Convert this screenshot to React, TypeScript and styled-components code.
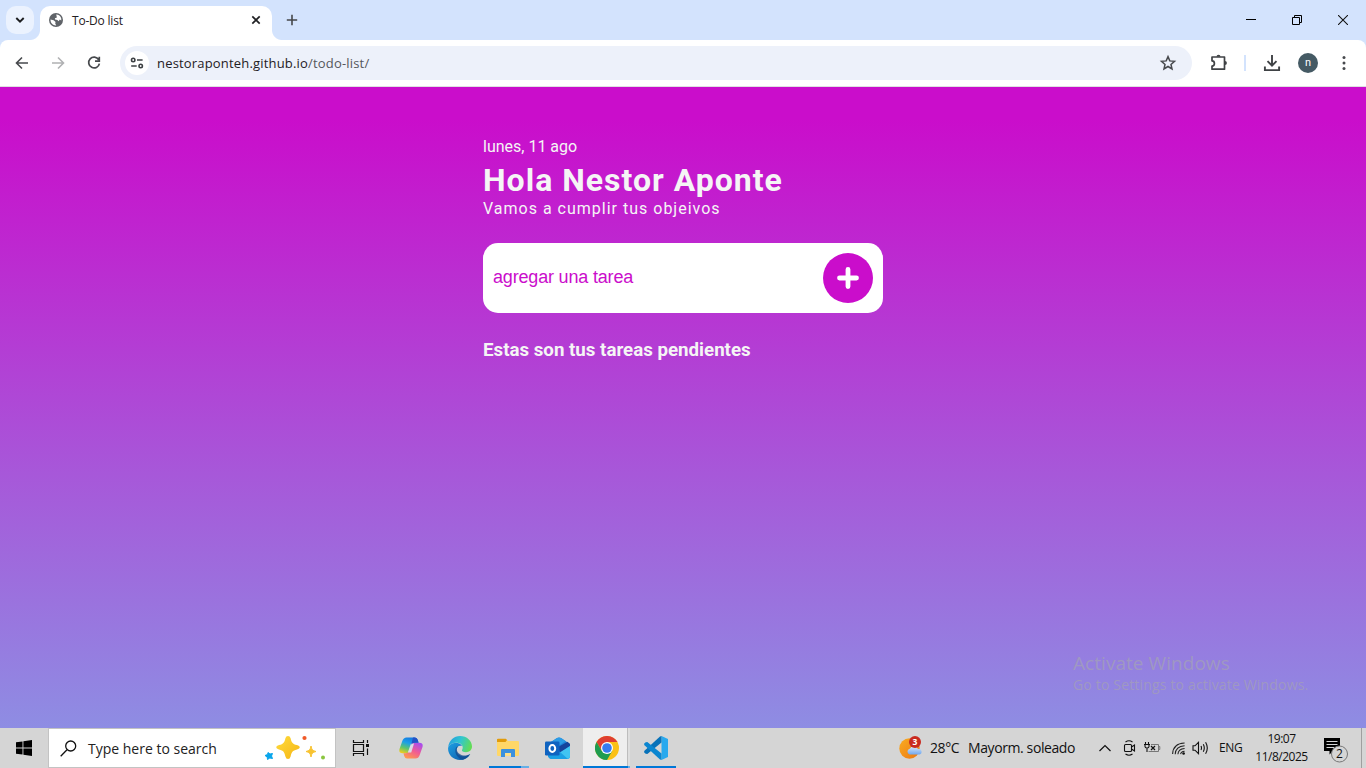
import React from "react";
import styled, { createGlobalStyle } from "styled-components";

const ui = `"Open Sans", "Noto Sans", sans-serif`;

const GlobalStyle = createGlobalStyle`
  * { box-sizing: border-box; }
  body { margin: 0; overflow: hidden; }
  svg { display: block; flex: none; }
`;

const Screen = styled.div`
  width: 1366px;
  height: 768px;
  display: flex;
  flex-direction: column;
  overflow: hidden;
`;

const TabStrip = styled.div`
  height: 40px;
  flex: none;
  display: flex;
  align-items: flex-start;
  background: #d3e3fd;
`;

const TabSearch = styled.div`
  width: 28px;
  height: 28px;
  margin: 6px 6px 0;
  border-radius: 10px;
  display: grid;
  place-items: center;
  background: #ebf2fe;
`;

const Tab = styled.div`
  position: relative;
  width: 232px;
  height: 34px;
  margin-top: 6px;
  padding: 0 10px 6px 9px;
  border-radius: 10px 10px 0 0;
  background: #fff;
  display: flex;
  align-items: center;
  &::before, &::after {
    content: "";
    position: absolute;
    bottom: 0;
    width: 10px;
    height: 10px;
  }
  &::before {
    left: -10px;
    background: radial-gradient(circle at 0 0, transparent 9.5px, #fff 10.5px);
  }
  &::after {
    right: -10px;
    background: radial-gradient(circle at 100% 0, transparent 9.5px, #fff 10.5px);
  }
`;

const Label = styled.span<{ $size: number; $spacing?: number; $color?: string }>`
  font-family: ${ui};
  font-size: ${(p) => p.$size}px;
  letter-spacing: ${(p) => p.$spacing ?? 0}px;
  color: ${(p) => p.$color ?? "#111"};
  line-height: 18px;
  white-space: nowrap;
`;

const TabTitle = styled(Label)`
  flex: 1;
  margin-left: 9px;
  padding-top: 2px;
`;

const NewTab = styled.div`
  margin: 13px 0 0 13px;
`;

const WindowControls = styled.div`
  display: flex;
  margin-left: auto;
`;

const WindowButton = styled.div`
  width: 46px;
  height: 40px;
  display: grid;
  place-items: center;
`;

const ToolbarBack = styled.div`
  flex: none;
  background: #d3e3fd;
`;

const Toolbar = styled.div`
  height: 47px;
  padding: 0 12px 0 13px;
  display: flex;
  align-items: center;
  background: #fff;
  border-radius: 8px 8px 0 0;
  border-bottom: 1px solid #dfdfe2;
`;

const NavButtons = styled.div`
  display: flex;
  gap: 18px;
`;

const AddressBar = styled.div`
  width: 1072px;
  height: 34px;
  margin-left: 17px;
  padding: 0 15px 0 5px;
  border-radius: 17px;
  background: #edf1fa;
  display: flex;
  align-items: center;
`;

const SiteInfo = styled.div`
  width: 24px;
  height: 24px;
  border-radius: 50%;
  background: #fff;
  display: grid;
  place-items: center;
`;

const Url = styled(Label)`
  flex: 1;
  margin-left: 8px;
  span { color: #55575b; }
`;

const ToolbarActions = styled.div`
  display: flex;
  align-items: center;
  margin-left: auto;
`;

const Separator = styled.div`
  width: 2px;
  height: 16px;
  margin: 0 17px 0 16px;
  background: #d3e3fd;
`;

const Avatar = styled.div`
  width: 20px;
  height: 20px;
  margin: 0 16px 0 17px;
  border-radius: 50%;
  background: #455a64;
  color: #fff;
  font: 11px/19px Roboto, sans-serif;
  text-align: center;
`;

const Page = styled.main`
  flex: 1;
  position: relative;
  background: linear-gradient(180deg, #ca0dcb 5%, #8e8de3 100%);
  display: flex;
  justify-content: center;
  font-family: Roboto, sans-serif;
  color: #f5f5f5;
`;

const Content = styled.section`
  width: 400px;
  padding-top: 50px;
`;

const DateLine = styled.p`
  margin: 0;
  font-size: 16px;
  line-height: 19px;
`;

const Greeting = styled.h1`
  margin: 5px 0 0;
  font-size: 32px;
  line-height: 38px;
  letter-spacing: 1px;
`;

const Motto = styled.p`
  margin: 0;
  font-size: 16px;
  line-height: 19px;
  letter-spacing: 1px;
`;

const TaskForm = styled.div`
  height: 70px;
  margin-top: 25px;
  padding: 10px;
  border-radius: 15px;
  background: #fff;
  display: flex;
  align-items: center;
  justify-content: space-between;
`;

const Placeholder = styled.span`
  font: 18px/22px "Liberation Sans", Arial, sans-serif;
  letter-spacing: -0.18px;
  color: #ca0dcb;
  margin-top: -2px;
`;

const AddButton = styled.div`
  width: 50px;
  height: 50px;
  border-radius: 50%;
  background: #ca0dcb;
  display: grid;
  place-items: center;
`;

const Pending = styled.h3`
  margin: 26px 0 0;
  font-size: 18.72px;
  line-height: 22px;
`;

const Watermark = styled.div`
  position: absolute;
  left: 1073px;
  top: 563px;
  display: flex;
  flex-direction: column;
`;

const WatermarkTitle = styled(Label)`
  line-height: 26px;
`;

const Taskbar = styled.footer`
  height: 40px;
  flex: none;
  display: flex;
  align-items: stretch;
  background: #d5d5d5;
`;

const Start = styled.div`
  width: 48px;
  display: grid;
  place-items: center;
`;

const SearchBox = styled.div`
  width: 288px;
  border: 1px solid #c3c3c3;
  background: #fff;
  display: flex;
  align-items: center;
  padding: 0 7px 0 11px;
`;

const SearchText = styled(Label)`
  flex: 1;
  margin-left: 11px;
  padding-top: 1px;
`;

const Apps = styled.div`
  display: flex;
`;

const TaskbarApp = styled.div<{ $active?: boolean; $shift?: number }>`
  width: 49px;
  position: relative;
  display: grid;
  place-items: center;
  background: ${(p) => (p.$active ? "linear-gradient(90deg, transparent 2px, #eeeeee 2px 46px, #bdbdbd 46px 47px, #dedede 47px)" : "none")};
  padding-left: ${(p) => p.$shift ?? 0}px;
`;

const Underline = styled.div<{ $left: number; $main: number; $extra: number }>`
  position: absolute;
  bottom: 0;
  left: ${(p) => p.$left}px;
  width: ${(p) => p.$main + p.$extra}px;
  height: 2px;
  background: linear-gradient(90deg, #0078d7 ${(p) => p.$main}px, #67b0e6 ${(p) => p.$main}px);
`;

const Tray = styled.div`
  display: flex;
  align-items: center;
  margin-left: auto;
`;

const TrayItem = styled.div<{ $width: number }>`
  width: ${(p) => p.$width}px;
  flex: none;
  display: flex;
  align-items: center;
`;

const Clock = styled.div`
  width: 75px;
  display: flex;
  flex-direction: column;
  align-items: center;
`;

const ShowDesktop = styled.div`
  width: 5px;
  align-self: stretch;
  border-left: 1px solid #9f9f9f;
`;

const Globe = () => (
  <svg width="14" height="14" viewBox="0 0 14 14">
    <circle cx="7" cy="7" r="7" fill="#5f6368" />
    <path d="M7.2 1.5 C9.6 1.5 11.6 3.2 12.2 5.2 L12.3 7.4 L10.8 6.6 L9.6 8.2 L8.4 6.9 L6 6.6 L5.9 5.2 L7.9 4.6 Z" fill="#fff" />
    <path d="M1.5 6.6 L4.6 7.2 L6.6 9 L6.2 10.2 L7.2 12.5 C4 12.6 1.4 10.2 1.5 6.6Z" fill="#fff" />
  </svg>
);

const Extension = () => (
  <svg width="18" height="18" viewBox="0 0 18 18" fill="none" stroke="#3f4245" strokeWidth="1.7">
    <path d="M2 3 H14.5 V15.2 H2 V12 C5.2 12 5.2 6.8 2 6.8 Z" strokeLinejoin="round" />
    <path d="M6.5 2.8 A2 2 0 0 1 10.5 2.8Z M14.9 7 A2 2 0 0 1 14.9 11Z" fill="#3f4245" stroke="none" />
  </svg>
);

const Sparkles = () => (
  <svg width="64" height="32" viewBox="0 0 64 32">
    <defs>
      <linearGradient id="star" x1="0" y1="0" x2="1" y2="1">
        <stop offset="0" stopColor="#ffdc3d" />
        <stop offset="1" stopColor="#f5b515" />
      </linearGradient>
    </defs>
    <path d="M24 4 Q26 4 26.6 6.2 C27.6 10.4 28.4 12 33 13 Q35.8 14 35.8 15.3 Q35.8 16.6 33 17.5 C28.4 18.5 27.6 20.2 26.6 24.5 Q26 27 24 27 Q22 27 21.4 24.5 C20.4 20.2 19.6 18.5 15 17.5 Q12.2 16.6 12.2 15.3 Q12.2 14 15 13 C19.6 12 20.4 10.4 21.4 6.2 Q22 4 24 4Z" fill="url(#star)" />
    <path d="M47 14 C47.7 17.8 48.5 18.6 52 19.5 C48.5 20.4 47.7 21.2 47 25 C46.3 21.2 45.5 20.4 42 19.5 C45.5 18.6 46.3 17.8 47 14Z" fill="#f8c331" stroke="#f8c331" strokeLinejoin="round" />
    <path d="M4 20.5 L6 22 L8.5 21.5 L7.5 24 L8.5 26.5 L5.8 26 L3.5 27.5 L3.2 25 L1 23.5 L3.5 22.5Z" fill="#08a5ec" stroke="#08a5ec" strokeLinejoin="round" />
    <circle cx="40.5" cy="6" r="2.1" fill="#f05a28" />
    <circle cx="59" cy="25.5" r="2" fill="#8ac53f" />
  </svg>
);

const TaskView = () => (
  <svg width="18" height="18" viewBox="0 0 18 18" fill="none" stroke="#111" strokeWidth="1.2">
    <path d="M1.5 1 V3.5 H11.5 V1 M1.5 17 V14.5 H11.5 V17 M1.5 5.5 H11.5 V12.5 H1.5Z M15.5 1 V4 M15.5 9.5 V16" />
    <rect x="14" y="5" width="3" height="3" fill="#111" stroke="none" />
  </svg>
);

const Copilot = () => (
  <svg width="24" height="22" viewBox="0 0 24 22">
    <defs>
      <linearGradient id="cp1" x1="0.6" y1="0" x2="0.2" y2="1">
        <stop offset="0" stopColor="#1478e0" />
        <stop offset=".35" stopColor="#1b9fe8" />
        <stop offset=".68" stopColor="#5ec56d" />
        <stop offset="1" stopColor="#f4cc1c" />
      </linearGradient>
      <linearGradient id="cp2" x1=".8" y1="0" x2=".2" y2="1">
        <stop offset="0" stopColor="#a64cf0" />
        <stop offset=".5" stopColor="#f15c93" />
        <stop offset="1" stopColor="#ff9c4a" />
      </linearGradient>
    </defs>
    <path d="M7.5 .5 H16 Q18 .5 18.8 3 L19.5 5.7 H17 Q14.8 5.7 14 8 L11.8 14 Q11 16.3 8.8 16.3 H3.5 Q-.5 16.3 .5 12 L3.3 4 Q4.5 .5 7.5 .5Z" fill="url(#cp1)" />
    <path d="M16.5 21.5 H8 Q6 21.5 5.2 19 L4.5 16.3 H7 Q9.2 16.3 10 14 L12.2 8 Q13 5.7 15.2 5.7 H20.5 Q24.5 5.7 23.5 10 L20.7 18 Q19.5 21.5 16.5 21.5Z" fill="url(#cp2)" />
    <path d="M12 6.5 H15 L12.2 15.5 H8.8Z" fill="#d9dbe6" />
    <path d="M14 .5 H16 Q18 .5 18.8 3 L19.6 5.7 H15.2 Q13.4 5.7 12.2 7.8Z" fill="#2451c6" />
  </svg>
);

const Edge = () => (
  <svg width="24" height="24" viewBox="0 0 24 24">
    <defs>
      <linearGradient id="ed1" x1="0" y1=".2" x2="1" y2=".5">
        <stop offset="0" stopColor="#249bdf" />
        <stop offset=".5" stopColor="#31c6cf" />
        <stop offset="1" stopColor="#62dc55" />
      </linearGradient>
      <linearGradient id="ed2" x1="0" y1="0" x2="1" y2="1">
        <stop offset="0" stopColor="#1e9fe3" />
        <stop offset="1" stopColor="#0c56a5" />
      </linearGradient>
    </defs>
    <path d="M.2 11 C1 4.5 6 0 12 0 C19 0 24 5 24 10.5 C24 14 21.3 16.2 18 16.2 C15 16.2 13.5 15 14 14 C15.8 11.5 14.5 7.5 9.5 6.8 C5 6.3 1.5 8.5 .2 11Z" fill="url(#ed1)" />
    <path d="M.1 12 C.5 8.5 5 6.4 9.5 7 C12 7.4 13.5 8.7 14 10 C11 8.8 8.5 11 8.5 14 C8.5 18.5 13 20.8 17 20.2 C19.5 19.8 21 18.8 22.2 18 C20 22 16.5 24 12 24 C5 24 -.4 18.5 .1 12Z" fill="url(#ed2)" />
    <path d="M8.5 11 C5.5 15 8.5 22 14.2 23.8 C17.5 23.2 20.5 21 22.2 18 C19 19.8 15 20.2 11.8 18 C8.5 15.5 8 12.7 10 10.4Z" fill="#11498d" opacity=".75" />
  </svg>
);

const Folder = () => (
  <svg width="22" height="20" viewBox="0 0 22 20">
    <path d="M0 2 Q0 1 1 1 H9 L11 3 H21 Q22 3 22 4 V17 Q22 18 21 18 H1 Q0 18 0 17Z" fill="#ffd768" />
    <path d="M0 1.5 Q0 .7 1 .7 H8.8 L10 2 L8.5 4 H0Z" fill="#e19b0b" />
    <path d="M4 19 V12 Q4 11 5 11 H17 Q18 11 18 12 V19 H14 V15 H8 V19Z" fill="#3c91de" />
    <path d="M8 15 H14 V17.8 H8Z" fill="#ffe08a" />
  </svg>
);

const Outlook = () => (
  <svg width="25" height="24" viewBox="0 0 25 24">
    <path d="M3 8 L12 2 Q14 1 16 2 L25 8 V20 Q25 23 22 23 H7 Q4 23 3 20Z" fill="#1d82d8" />
    <path d="M4.5 7 L12 2 Q14 1 16 2 L20.5 5 L12 11Z" fill="#2b9be6" />
    <path d="M13 11 L22.5 5.8 L25 8 V10 L15 17Z" fill="#15439c" />
    <path d="M25 10 V20 Q25 23 22 23 H7 L14 17Z" fill="#40c4f2" />
    <path d="M3 19 L15 16 L23 23 H7 Q4 23 3 20Z" fill="#1aa0e5" />
    <rect x="0" y="5.5" width="14.5" height="14" rx="1.3" fill="#0f63c0" />
    <ellipse cx="7.3" cy="12.5" rx="2.9" ry="3.4" fill="none" stroke="#fff" strokeWidth="2" />
  </svg>
);

const Chrome = () => (
  <svg width="24" height="24" viewBox="0 0 24 24">
    <circle cx="12" cy="12" r="12" fill="#fbc116" />
    <path d="M1.6 6 A12 12 0 0 1 22.4 6 H12 L6.8 15Z" fill="#df3f32" />
    <path d="M1.6 6 A12 12 0 0 0 12 24 L17.2 15 H6.8Z" fill="#1f9d50" />
    <circle cx="12" cy="12" r="6" fill="#fff" />
    <circle cx="12" cy="12" r="4.8" fill="#367cf0" />
  </svg>
);

const VsCode = () => (
  <svg width="24" height="24" viewBox="0 0 24 24">
    <path d="M17.5 0 L24 3 V21 L17.5 24Z" fill="#29a9ee" />
    <path d="M17.5 0 V6.5 L3.3 18 L1.7 17.8 L.2 16.4 V15 L16 .6Z" fill="#0872b9" />
    <path d="M17.5 24 V17.5 L3.3 6 L1.7 6.2 L.2 7.6 V9 L16 23.4Z" fill="#0b86d0" />
  </svg>
);

const Weather = () => (
  <svg width="24" height="24" viewBox="0 0 24 24">
    <defs>
      <linearGradient id="sun" x1="0" y1="0" x2="1" y2="1">
        <stop offset="0" stopColor="#f9ac22" />
        <stop offset="1" stopColor="#ec7813" />
      </linearGradient>
      <linearGradient id="cloud" x1="0" y1="0" x2="0" y2="1">
        <stop offset="0" stopColor="#dce9fb" />
        <stop offset="1" stopColor="#72a9ef" />
      </linearGradient>
    </defs>
    <circle cx="10.5" cy="12.5" r="10.2" fill="url(#sun)" />
    <path d="M10.5 18.4 A2.9 2.9 0 0 1 10.7 12.8 A4.5 4.5 0 0 1 19 13 A2.8 2.8 0 0 1 20.5 18.4Z" fill="url(#cloud)" />
    <circle cx="16" cy="6" r="6" fill="#c92a20" />
    <text x="16" y="9.2" textAnchor="middle" fontFamily="Open Sans, sans-serif" fontSize="8.5" fontWeight="700" fill="#fff">3</text>
  </svg>
);

export default function App() {
  return (
    <Screen>
      <GlobalStyle />
      <TabStrip>
        <TabSearch>
          <svg width="10" height="8" viewBox="0 0 10 8" fill="none" stroke="#1c1d1f" strokeWidth="1.9"><path d="M1.3 2 L5 5.7 L8.7 2" /></svg>
        </TabSearch>
        <Tab>
          <Globe />
          <TabTitle $size={12} $spacing={-0.2} $color="#1f2023">To-Do list</TabTitle>
          <svg width="12" height="12" viewBox="0 0 12 12" stroke="#202124" strokeWidth="1.7"><path d="M2.3 2.3 L9.7 9.7 M9.7 2.3 L2.3 9.7" /></svg>
        </Tab>
        <NewTab>
          <svg width="14" height="14" viewBox="0 0 14 14" stroke="#45474a" strokeWidth="1.6"><path d="M7 1.8 V12.2 M1.8 7 H12.2" /></svg>
        </NewTab>
        <WindowControls>
          <WindowButton><svg width="10" height="10" viewBox="0 0 10 10"><path d="M0 4 H10 V5 H0Z" /></svg></WindowButton>
          <WindowButton><svg width="10" height="10" viewBox="0 0 10 10" fill="none" stroke="#000"><path d="M.5 2.5 H7.5 V9.5 H.5Z M2.5 2 V.5 H9.5 V7.5 H8" /></svg></WindowButton>
          <WindowButton><svg width="10" height="10" viewBox="0 0 10 10" stroke="#111" strokeWidth="1.05"><path d="M0 0 L10 10 M10 0 L0 10" /></svg></WindowButton>
        </WindowControls>
      </TabStrip>
      <ToolbarBack>
        <Toolbar>
          <NavButtons>
            <svg width="18" height="18" viewBox="0 0 18 18" fill="none" stroke="#47494d" strokeWidth="1.6"><path d="M15 9 H4 M9 3.5 L3.5 9 L9 14.5" /></svg>
            <svg width="18" height="18" viewBox="0 0 18 18" fill="none" stroke="#b0b1b3" strokeWidth="1.6"><path d="M3 9 H14 M9 3.5 L14.5 9 L9 14.5" /></svg>
            <svg width="18" height="18" viewBox="0 0 18 18" fill="none" stroke="#47494d" strokeWidth="1.7"><path d="M13.7 5.7 A5.4 5.4 0 1 0 14.4 9.6 M14.3 2.8 V7.1 H10" /></svg>
          </NavButtons>
          <AddressBar>
            <SiteInfo>
              <svg width="14" height="12" viewBox="0 0 14 12" fill="none" stroke="#3c4043" strokeWidth="1.6"><circle cx="3.2" cy="3" r="1.7" /><path d="M7 3 H12.6 M1.2 9 H6.7" /><circle cx="10.7" cy="9" r="1.7" /></svg>
            </SiteInfo>
            <Url $size={13} $spacing={0.18} $color="#1f2023">nestoraponteh.github.io<span>/todo-list/</span></Url>
            <svg width="18" height="18" viewBox="0 0 18 18" fill="none" stroke="#47494d" strokeWidth="1.5"><path d="M9 2.6 L10.8 6.9 L15.5 7.3 L12 10.4 L13 15 L9 12.5 L5 15 L6 10.4 L2.5 7.3 L7.2 6.9Z" /></svg>
          </AddressBar>
          <ToolbarActions>
            <Extension />
            <Separator />
            <svg width="18" height="18" viewBox="0 0 18 18" fill="none" stroke="#3f4245" strokeWidth="1.9"><path d="M9 1 V11.5 M4.5 7.2 L9 11.7 L13.5 7.2 M1.9 12.5 V16.1 H16.1 V12.5" /></svg>
            <Avatar>n</Avatar>
            <svg width="20" height="18" viewBox="0 0 20 18" fill="#47494d"><circle cx="10" cy="3.5" r="1.5" /><circle cx="10" cy="9" r="1.5" /><circle cx="10" cy="14.5" r="1.5" /></svg>
          </ToolbarActions>
        </Toolbar>
      </ToolbarBack>
      <Page>
        <Content>
          <DateLine>lunes, 11 ago</DateLine>
          <Greeting>Hola Nestor Aponte</Greeting>
          <Motto>Vamos a cumplir tus objeivos</Motto>
          <TaskForm>
            <Placeholder>agregar una tarea</Placeholder>
            <AddButton>
              <svg width="24" height="24" viewBox="0 0 24 24" stroke="#fff" strokeWidth="4.8" strokeLinecap="round"><path d="M12 3.5 V20.5 M3.5 12 H20.5" /></svg>
            </AddButton>
          </TaskForm>
          <Pending>Estas son tus tareas pendientes</Pending>
        </Content>
        <Watermark>
          <WatermarkTitle $size={19} $spacing={0.05} $color="#9f98c2">Activate Windows</WatermarkTitle>
          <Label $size={14} $spacing={0.17} $color="#9f98c2">Go to Settings to activate Windows.</Label>
        </Watermark>
      </Page>
      <Taskbar>
        <Start>
          <svg width="16" height="16" viewBox="0 0 16 16"><path d="M0 2.3 L6.5 1.4 V7.5 H0Z M7.4 1.2 L16 0 V7.5 H7.4Z M0 8.4 H6.5 V14.6 L0 13.7Z M7.4 8.4 H16 V16 L7.4 14.8Z" /></svg>
        </Start>
        <SearchBox>
          <svg width="17" height="17" viewBox="0 0 17 17" fill="none" stroke="#111" strokeWidth="1.3"><circle cx="10.7" cy="6" r="5" /><path d="M7 9.8 L.7 16.2" /></svg>
          <SearchText $size={14} $spacing={0} $color="#222">Type here to search</SearchText>
          <Sparkles />
        </SearchBox>
        <Apps>
          <TaskbarApp $shift={-1}><TaskView /></TaskbarApp>
          <TaskbarApp $shift={2}><Copilot /></TaskbarApp>
          <TaskbarApp $shift={2}><Edge /></TaskbarApp>
          <TaskbarApp><Folder /><Underline $left={6} $main={32} $extra={8} /></TaskbarApp>
          <TaskbarApp $shift={1}><Outlook /></TaskbarApp>
          <TaskbarApp $active $shift={2}><Chrome /><Underline $left={2} $main={45} $extra={2} /></TaskbarApp>
          <TaskbarApp $shift={2}><VsCode /><Underline $left={6} $main={40} $extra={0} /></TaskbarApp>
        </Apps>
        <Tray>
          <TrayItem $width={31}><Weather /></TrayItem>
          <TrayItem $width={38}><Label $size={14} $spacing={-0.4}>28°C</Label></TrayItem>
          <TrayItem $width={131}><Label $size={14} $spacing={-0.4}>Mayorm. soleado</Label></TrayItem>
          <TrayItem $width={24}><svg width="12" height="8" viewBox="0 0 12 8" fill="none" stroke="#111" strokeWidth="1.2"><path d="M.5 7 L6 1.5 L11.5 7" /></svg></TrayItem>
          <TrayItem $width={21}><svg width="13" height="16" viewBox="0 0 13 16" fill="none" stroke="#111" strokeWidth="1.1"><rect x="1.5" y="4.5" width="7" height="7" rx="1" /><path d="M8.5 7 L11.5 5 V11 L8.5 9 M2.5 2 Q6 -.4 9.5 2 M2.5 14 Q6 16.4 9.5 14" /></svg></TrayItem>
          <TrayItem $width={28}>
            <svg width="17" height="14" viewBox="0 0 17 14" fill="none" stroke="#111" strokeWidth="1.1">
              <path d="M1.5 1 V3.5 M4.5 1 V3.5 M0 3.5 H6 M1 4 V5.5 Q1 7 3 7 Q5 7 5 5.5 V4 M3 7 V11" />
              <path d="M7 3.5 H14.5 V10.5 H4.5 M14.5 5.5 H15.8 V8.5 H14.5" stroke="#777" strokeWidth="1" />
              <path d="M7 5 L11 9 M11 5 L7 9" strokeWidth="1.2" />
            </svg>
          </TrayItem>
          <TrayItem $width={20}><svg width="14" height="13" viewBox="0 0 14 13" fill="none" stroke="#222" strokeWidth="1.1"><path d="M.6 12 Q1 1.5 12.6 1 M3.2 12.2 Q3.7 4.4 12.6 3.8 M5.9 12.2 Q6.3 7 12.6 6.5 M8.6 12.2 Q9 9.5 12.6 9.2" /><circle cx="11.6" cy="11.5" r="1.3" fill="#111" stroke="none" /></svg></TrayItem>
          <TrayItem $width={27}><svg width="18" height="14" viewBox="0 0 18 14" fill="none" stroke="#111" strokeWidth="1.1"><path d="M1 4.8 H3 L6.5 1.3 V12.7 L3 9.2 H1Z M9 5 Q10 7 9 9 M11.3 3.2 Q13.3 7 11.3 10.8 M13.6 1.3 Q17 7 13.6 12.7" /></svg></TrayItem>
          <TrayItem $width={25}><Label $size={12} $spacing={-0.4}>ENG</Label></TrayItem>
          <Clock>
            <Label $size={12} $spacing={-0.5}>19:07</Label>
            <Label $size={12} $spacing={-0.5}>11/8/2025</Label>
          </Clock>
          <TrayItem $width={42}>
            <svg width="30" height="30" viewBox="0 0 30 30">
              <path d="M5 5 H21 V18 H14 L10.5 21.5 V18 H5Z" fill="#000" />
              <path d="M7.5 8.5 H18.5 M7.5 11.5 H18.5 M7.5 14.5 H15" stroke="#d5d5d5" />
              <circle cx="20.5" cy="21" r="8" fill="#d5d5d5" stroke="#777" strokeWidth="1" />
              <text x="20.5" y="25.3" textAnchor="middle" fontFamily="Open Sans, sans-serif" fontSize="12" fill="#111">2</text>
            </svg>
          </TrayItem>
          <ShowDesktop />
        </Tray>
      </Taskbar>
    </Screen>
  );
}
